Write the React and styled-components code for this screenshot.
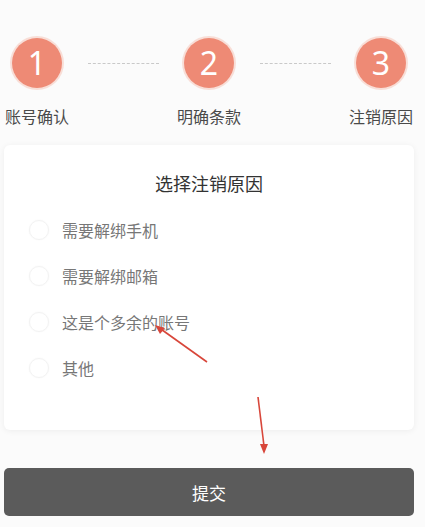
import React from "react";
import styled, { createGlobalStyle } from "styled-components";

const GlobalStyle = createGlobalStyle`
  html, body {
    margin: 0;
    padding: 0;
    background: #fbfbfb;
    font-family: "Noto Sans", "Noto Sans CJK SC", sans-serif;
  }
`;

const Page = styled.div`
  position: relative;
  width: 425px;
  height: 527px;
  overflow: hidden;
`;

const Steps = styled.div`
  display: flex;
  justify-content: space-between;
  padding: 38px 12px 0 5px;
`;

const Step = styled.div`
  width: 64px;
  display: flex;
  flex-direction: column;
  align-items: center;
`;

const Circle = styled.div`
  width: 50px;
  height: 50px;
  border-radius: 50%;
  background: #ee8a75;
  box-shadow: 0 0 0 2px rgba(244, 170, 150, 0.35);
  color: #fff;
  font-family: "Noto Sans", sans-serif;
  font-size: 32px;
  line-height: 50px;
  text-align: center;
`;

const StepLabel = styled.div`
  margin-top: 18px;
  font-family: "Noto Sans CJK SC", sans-serif;
  font-size: 16px;
  line-height: 21px;
  color: #4a4a4a;
  white-space: nowrap;
`;

const Dash = styled.div`
  width: 71px;
  margin-top: 25px;
  border-top: 1px dashed #c9c9c9;
  height: 0;
`;

const Card = styled.div`
  margin: 18px 11px 0 4px;
  background: #fff;
  border-radius: 6px;
  box-shadow: 0 1px 6px rgba(0, 0, 0, 0.06);
  padding: 25px 0 39px;
`;

const Title = styled.div`
  text-align: center;
  font-family: "Noto Sans CJK SC", sans-serif;
  font-size: 18px;
  line-height: 26px;
  color: #333;
  margin-bottom: 11px;
`;

const Option = styled.label`
  display: flex;
  align-items: center;
  height: 46px;
  padding-left: 25px;
`;

const Radio = styled.span`
  width: 18px;
  height: 18px;
  border-radius: 50%;
  background: #fff;
  border: 1px solid #f3f3f3;
  box-shadow: 0 0 2px rgba(0, 0, 0, 0.04);
  margin-right: 13px;
`;

const OptionText = styled.span`
  font-family: "Noto Sans CJK SC", sans-serif;
  font-size: 16px;
  color: #777;
`;

const Submit = styled.button`
  display: block;
  width: 410px;
  height: 48px;
  margin: 38px 0 0 4px;
  border: none;
  border-radius: 5px;
  background: #5b5b5b;
  color: #fff;
  font-family: "Noto Sans CJK SC", sans-serif;
  font-size: 17px;
`;

const Annotations = styled.svg`
  position: absolute;
  left: 0;
  top: 0;
  pointer-events: none;
`;

const steps = ["账号确认", "明确条款", "注销原因"];
const reasons = ["需要解绑手机", "需要解绑邮箱", "这是个多余的账号", "其他"];

export default function App() {
  return (
    <Page>
      <GlobalStyle />
      <Steps>
        {steps.map((s, i) => (
          <React.Fragment key={s}>
            {i > 0 && <Dash />}
            <Step>
              <Circle>{i + 1}</Circle>
              <StepLabel>{s}</StepLabel>
            </Step>
          </React.Fragment>
        ))}
      </Steps>
      <Card>
        <Title>选择注销原因</Title>
        {reasons.map((r) => (
          <Option key={r}>
            <Radio />
            <OptionText>{r}</OptionText>
          </Option>
        ))}
      </Card>
      <Submit>提交</Submit>
      <Annotations width="425" height="527" viewBox="0 0 425 527">
        <line x1="207" y1="362" x2="158" y2="327" stroke="#d8463a" strokeWidth="1.6" />
        <polygon points="155,325 165,328 160,334" fill="#d8463a" />
        <line x1="258" y1="397" x2="264" y2="446" stroke="#d8463a" strokeWidth="1.6" />
        <polygon points="264,454 260,444 268,444" fill="#d8463a" />
      </Annotations>
    </Page>
  );
}
